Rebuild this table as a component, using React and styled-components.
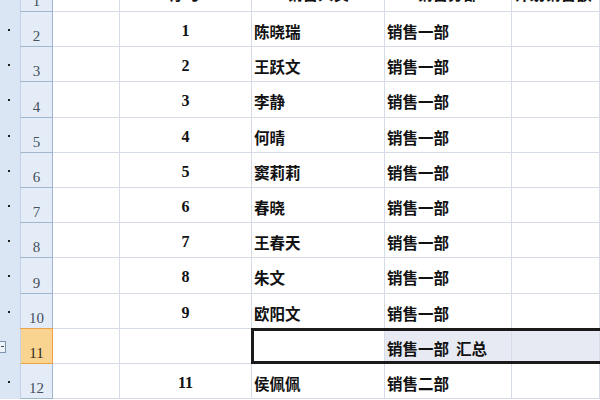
import React from 'react';
import styled, { createGlobalStyle, css } from 'styled-components';

const GlobalStyle = createGlobalStyle`
  html, body {
    margin: 0;
    padding: 0;
    background: #ffffff;
  }
  body {
    width: 600px;
    height: 400px;
    overflow: hidden;
  }
`;

const GRID = '#d6dce7';
const HEAD_LINE = '#9eb6ce';

const Viewport = styled.div`
  width: 600px;
  height: 400px;
  overflow: hidden;
`;

const Sheet = styled.div`
  display: flex;
  flex-direction: column;
  margin-top: -23.2px;
`;

const Row = styled.div`
  display: grid;
  grid-template-columns: 20px 33px 67px 132px 133px 127px 1fr;
  height: 35.2px;
  position: relative;
`;

const Outline = styled.div`
  background: #dbe6f4;
  display: flex;
  align-items: center;
  padding-left: 8px;
  padding-top: 1px;
  box-sizing: border-box;
`;

const Dot = styled.span`
  width: 2px;
  height: 2px;
  background: #1f1f1f;
`;

const Toggle = styled.span`
  width: 10px;
  height: 10px;
  margin-left: -15px;
  border: 1px solid #7f93ad;
  background: #eef3fa;
  display: flex;
  align-items: center;
  justify-content: flex-end;
  padding-right: 1px;

  &::after {
    content: '';
    width: 3px;
    height: 1px;
    background: #3a4a5e;
  }
`;

const RowHead = styled.div`
  background: #e4ecf7;
  border-left: 1px solid #c3d2e6;
  border-right: 1px solid ${HEAD_LINE};
  border-bottom: 1px solid ${HEAD_LINE};
  display: flex;
  align-items: flex-end;
  justify-content: center;
  padding-bottom: 1px;
  font-family: 'Liberation Serif', serif;
  font-size: 15px;
  line-height: 17px;
  color: #46505c;

  ${(p) =>
    p.$active &&
    css`
      background: #f9d491;
      border-right-color: #eda24a;
      border-bottom-color: #eda24a;
      box-shadow: 0 -1px 0 #eda24a;
      color: #2f2a22;
    `}
`;

const Cell = styled.div`
  border-right: 1px solid ${GRID};
  border-bottom: 1px solid ${GRID};
  display: flex;
  align-items: center;
  justify-content: ${(p) => (p.$center ? 'center' : 'flex-start')};
  padding: ${(p) => (p.$head ? '0 2px 1px' : '4px 2px 0')};
  overflow: hidden;
  white-space: pre;
  font-family: 'Noto Sans CJK SC', 'Liberation Sans', sans-serif;
  font-weight: 700;
  font-size: 15.5px;
  color: #111111;
  background: ${(p) => (p.$shaded ? '#e7eaf3' : '#ffffff')};
`;

const Num = styled.span`
  font-family: 'Liberation Serif', serif;
  font-size: 16px;
  font-weight: 700;
`;

const Selection = styled.div`
  position: absolute;
  left: 251px;
  right: -10px;
  top: -1px;
  bottom: 0;
  border: 3px solid #1b1b1b;
  pointer-events: none;
`;

const HEADERS = ['序号', '销售人员', '销售分部', '计划销售额（万元）'];

const DATA = [
  { no: 1, name: '陈晓瑞', dept: '销售一部' },
  { no: 2, name: '王跃文', dept: '销售一部' },
  { no: 3, name: '李静', dept: '销售一部' },
  { no: 4, name: '何晴', dept: '销售一部' },
  { no: 5, name: '窦莉莉', dept: '销售一部' },
  { no: 6, name: '春晓', dept: '销售一部' },
  { no: 7, name: '王春天', dept: '销售一部' },
  { no: 8, name: '朱文', dept: '销售一部' },
  { no: 9, name: '欧阳文', dept: '销售一部' },
  { subtotal: '销售一部  汇总' },
  { no: 11, name: '侯佩佩', dept: '销售二部' },
];

export default function App() {
  return (
    <Viewport>
      <GlobalStyle />
      <Sheet>
        <Row>
          <Outline />
          <RowHead>1</RowHead>
          <Cell $head />
          <Cell $head $center>{HEADERS[0]}</Cell>
          <Cell $head $center>{HEADERS[1]}</Cell>
          <Cell $head $center>{HEADERS[2]}</Cell>
          <Cell $head>{HEADERS[3]}</Cell>
        </Row>
        {DATA.map((r, i) => {
          const rowNo = i + 2;
          if (r.subtotal) {
            return (
              <Row key={rowNo}>
                <Outline>
                  <Toggle />
                </Outline>
                <RowHead $active>{rowNo}</RowHead>
                <Cell />
                <Cell />
                <Cell />
                <Cell $shaded>{r.subtotal}</Cell>
                <Cell $shaded />
                <Selection />
              </Row>
            );
          }
          return (
            <Row key={rowNo}>
              <Outline>
                <Dot />
              </Outline>
              <RowHead>{rowNo}</RowHead>
              <Cell />
              <Cell $center>
                <Num>{r.no}</Num>
              </Cell>
              <Cell>{r.name}</Cell>
              <Cell>{r.dept}</Cell>
              <Cell />
            </Row>
          );
        })}
      </Sheet>
    </Viewport>
  );
}
